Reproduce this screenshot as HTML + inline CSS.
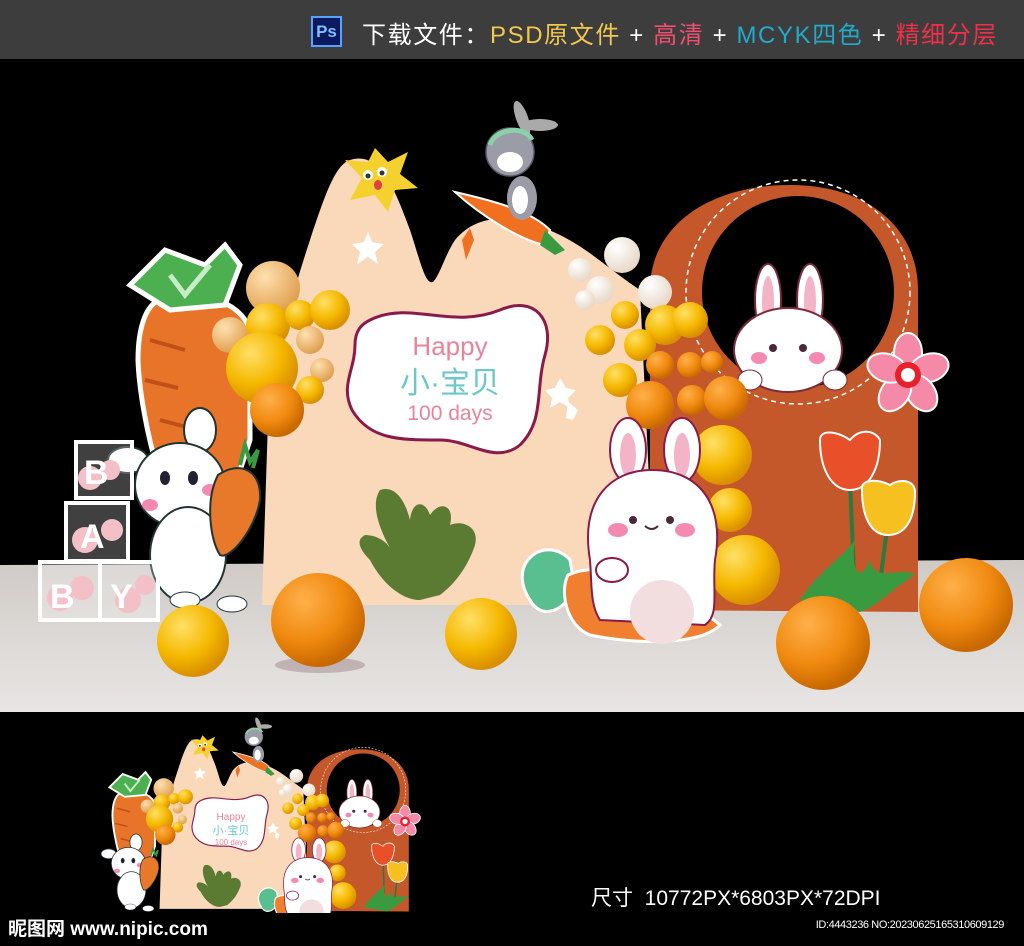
<!DOCTYPE html>
<html><head><meta charset="utf-8"><style>
html,body{margin:0;padding:0;background:#000;}
body{width:1024px;height:946px;overflow:hidden;position:relative;font-family:"Liberation Sans","Noto Sans CJK SC",sans-serif;}
.top{position:absolute;left:0;top:0;width:1024px;height:59px;background:#3d3d3d;}
.ps{position:absolute;left:311px;top:16px;width:31px;height:31px;background:#0a1a5c;border:2px solid #5aa0ff;box-sizing:border-box;color:#7cc0ff;font-size:17px;font-weight:bold;text-align:center;line-height:27px;}
.tt{position:absolute;left:362px;top:15px;font-size:24px;color:#fff;white-space:nowrap;letter-spacing:1.6px;}
.y{color:#f2c94c}.p{color:#f0506e}.c{color:#22aacc}.r{color:#f0304a}
.size{position:absolute;left:591px;top:882px;color:#fff;font-size:21px;}
.logo{position:absolute;left:8px;top:914px;color:#fff;font-size:19px;font-weight:bold;}
.id{position:absolute;right:20px;top:919px;color:#fff;font-size:11px;letter-spacing:-0.4px;}
svg{position:absolute;left:0;top:0;}
</style></head><body>
<div class="top"></div>
<div class="ps">Ps</div>
<div class="tt">下载文件：<span class="y">PSD原文件</span> + <span class="p">高清</span> + <span class="c">MCYK四色</span> + <span class="r">精细分层</span></div>
<svg width="1024" height="946" viewBox="0 0 1024 946">
<defs>
<radialGradient id="yb" cx="0.35" cy="0.3" r="0.7"><stop offset="0" stop-color="#ffe066"/><stop offset="0.6" stop-color="#f5b800"/><stop offset="1" stop-color="#d98f00"/></radialGradient>
<radialGradient id="ob" cx="0.35" cy="0.3" r="0.7"><stop offset="0" stop-color="#ffb04a"/><stop offset="0.6" stop-color="#f08a10"/><stop offset="1" stop-color="#c86800"/></radialGradient>
<radialGradient id="wb" cx="0.35" cy="0.3" r="0.7"><stop offset="0" stop-color="#fff"/><stop offset="1" stop-color="#e8d8c8"/></radialGradient>
<radialGradient id="tb" cx="0.35" cy="0.3" r="0.7"><stop offset="0" stop-color="#ffe0b0"/><stop offset="1" stop-color="#e0a050"/></radialGradient>
<linearGradient id="fl" x1="0" y1="0" x2="0" y2="1"><stop offset="0" stop-color="#cfcac6"/><stop offset="1" stop-color="#e8e6e4"/></linearGradient>
<g id="art">
 <path d="M262,605 L268,420 C275,360 290,300 310,240 C325,195 335,165 350,160 C380,150 395,190 410,230 C420,260 425,285 433,282 C440,275 445,255 455,240 C480,210 520,215 560,235 C590,250 610,270 640,290 L655,605 Z" fill="#f9d9ba"/>
 <path d="M650,610 L650,290 C650,225 710,185 790,185 C870,185 918,230 918,290 L918,612 Z" fill="#c4582a"/>
 <circle cx="798" cy="292" r="96" fill="#000"/>
 <circle cx="798" cy="292" r="112" fill="none" stroke="#fff" stroke-width="1.5" stroke-dasharray="5 4"/>
 <ellipse cx="768" cy="300" rx="13" ry="36" fill="#fff" stroke="#7a2b3a" stroke-width="2"/>
 <ellipse cx="810" cy="300" rx="13" ry="36" fill="#fff" stroke="#7a2b3a" stroke-width="2"/>
 <ellipse cx="768" cy="302" rx="6" ry="26" fill="#f4b4c8"/><ellipse cx="810" cy="302" rx="6" ry="26" fill="#f4b4c8"/>
 <ellipse cx="788" cy="350" rx="54" ry="42" fill="#fff" stroke="#7a2b3a" stroke-width="2"/>
 <circle cx="773" cy="348" r="4" fill="#4a2a3a"/><circle cx="803" cy="348" r="4" fill="#4a2a3a"/>
 <ellipse cx="759" cy="358" rx="8" ry="6" fill="#f48ab0"/><ellipse cx="817" cy="358" rx="8" ry="6" fill="#f48ab0"/>
 <ellipse cx="750" cy="380" rx="12" ry="10" fill="#fff" stroke="#7a2b3a"/><ellipse cx="835" cy="380" rx="12" ry="10" fill="#fff" stroke="#7a2b3a"/>
 <g transform="translate(908,375)">
  <g fill="#f48aa8" stroke="#fff" stroke-width="2">
   <ellipse cx="0" cy="-22" rx="14" ry="20"/><ellipse cx="21" cy="-7" rx="14" ry="20" transform="rotate(72 21 -7)"/><ellipse cx="13" cy="18" rx="14" ry="20" transform="rotate(144 13 18)"/><ellipse cx="-13" cy="18" rx="14" ry="20" transform="rotate(216 -13 18)"/><ellipse cx="-21" cy="-7" rx="14" ry="20" transform="rotate(288 -21 -7)"/>
  </g>
  <circle r="13" fill="#e8202a"/><circle r="7" fill="#fff"/>
 </g>
 <path d="M850,480 L855,600 M888,520 L878,600" stroke="#2d7a40" stroke-width="4"/>
 <path d="M800,600 C820,570 840,560 855,540 C850,570 860,585 870,560 C875,585 900,565 915,575 C890,590 880,605 860,612 Z" fill="#3a9a40"/>
 <path d="M820,440 C820,430 835,430 850,440 C860,428 875,430 880,440 C880,470 868,490 850,490 C832,490 820,470 820,440 Z" fill="#e8502a" stroke="#fff" stroke-width="2"/>
 <path d="M862,490 C860,480 875,478 890,485 C900,478 915,480 915,492 C915,520 905,535 888,535 C870,535 862,515 862,490 Z" fill="#f5c020" stroke="#fff" stroke-width="2"/>
 <path d="M160,300 C200,290 240,300 250,330 L250,440 C240,470 220,540 200,540 C170,540 140,420 138,360 C138,330 145,305 160,300 Z" fill="#e77428" stroke="#fff" stroke-width="5"/>
 <path d="M150,340 L185,350 M145,380 L178,388 M160,420 L190,428" stroke="#c0501a" stroke-width="4"/>
 <path d="M130,285 L165,250 L205,265 L225,245 L240,265 L225,305 L170,310 Z" fill="#4caf50" stroke="#fff" stroke-width="5"/>
 <path d="M170,275 L185,295 L210,265" stroke="#c8ecc8" stroke-width="5" fill="none"/>
 <path d="M375,148 L388,162 L408,152 L400,174 L418,188 L395,190 L388,212 L375,195 L350,200 L362,178 L345,160 L368,162 Z" fill="#f5d130"/>
 <circle cx="368" cy="175" r="5" fill="#fff"/><circle cx="382" cy="172" r="5" fill="#fff"/><circle cx="368" cy="176" r="2.5" fill="#333"/><circle cx="382" cy="173" r="2.5" fill="#333"/>
 <ellipse cx="378" cy="185" rx="4" ry="5" fill="#e04040"/>
 <path d="M368,232 L372,242 L384,244 L375,252 L378,264 L368,257 L357,264 L360,252 L352,244 L364,242 Z" fill="#fff"/>
 <path d="M455,192 C490,200 530,210 550,230 L545,245 C520,240 480,215 455,192 Z" fill="#f07020" stroke="#fff" stroke-width="2"/>
 <path d="M545,230 L565,250 L555,255 L540,245 Z" fill="#3a9a40"/>
 <path d="M462,240 L470,228 L474,240 L466,260 Z" fill="#f07020"/>
 <ellipse cx="522" cy="118" rx="6" ry="18" fill="#aaa" transform="rotate(-20 522 118)"/>
 <ellipse cx="540" cy="125" rx="18" ry="6" fill="#aaa"/>
 <circle cx="510" cy="152" r="24" fill="#9a9ca8" stroke="#5a5a6a" stroke-width="1.5"/>
 <path d="M490,145 C495,128 525,125 532,140" stroke="#8ad0a8" stroke-width="5" fill="none"/>
 <ellipse cx="510" cy="162" rx="13" ry="10" fill="#fff"/>
 <ellipse cx="522" cy="198" rx="15" ry="22" fill="#9a9ca8"/>
 <ellipse cx="520" cy="200" rx="8" ry="14" fill="#fff"/>
 <path d="M370,320 C410,300 450,330 500,310 C535,295 555,320 545,355 C535,390 545,420 520,445 C495,465 470,440 440,440 C400,440 370,440 352,410 C340,385 355,370 355,345 C355,330 362,324 370,320 Z" fill="#fff" stroke="#8a1a4a" stroke-width="3"/>
 <circle cx="273" cy="288" r="27" fill="url(#tb)"/>
 <circle cx="230" cy="335" r="18" fill="url(#tb)"/>
 <circle cx="268" cy="325" r="22" fill="url(#yb)"/>
 <circle cx="300" cy="315" r="15" fill="url(#yb)"/>
 <circle cx="330" cy="310" r="20" fill="url(#yb)"/>
 <circle cx="310" cy="340" r="14" fill="url(#tb)"/>
 <circle cx="322" cy="370" r="12" fill="url(#tb)"/>
 <circle cx="262" cy="368" r="36" fill="url(#yb)"/>
 <circle cx="310" cy="390" r="14" fill="url(#yb)"/>
 <circle cx="277" cy="410" r="27" fill="url(#ob)"/>
 <circle cx="622" cy="255" r="18" fill="url(#wb)"/>
 <circle cx="580" cy="270" r="12" fill="url(#wb)"/>
 <circle cx="600" cy="290" r="14" fill="url(#wb)"/>
 <circle cx="655" cy="292" r="17" fill="url(#wb)"/>
 <circle cx="585" cy="300" r="10" fill="url(#wb)"/>
 <circle cx="625" cy="315" r="14" fill="url(#yb)"/>
 <circle cx="665" cy="325" r="20" fill="url(#yb)"/>
 <circle cx="690" cy="320" r="18" fill="url(#yb)"/>
 <circle cx="600" cy="340" r="15" fill="url(#yb)"/>
 <circle cx="640" cy="345" r="16" fill="url(#yb)"/>
 <circle cx="620" cy="380" r="17" fill="url(#yb)"/>
 <circle cx="660" cy="365" r="14" fill="url(#ob)"/>
 <circle cx="690" cy="365" r="13" fill="url(#ob)"/>
 <circle cx="712" cy="362" r="11" fill="url(#ob)"/>
 <circle cx="650" cy="405" r="24" fill="url(#ob)"/>
 <circle cx="692" cy="400" r="15" fill="url(#ob)"/>
 <circle cx="726" cy="398" r="22" fill="url(#ob)"/>
 <circle cx="722" cy="455" r="30" fill="url(#yb)"/>
 <circle cx="730" cy="510" r="22" fill="url(#yb)"/>
 <circle cx="745" cy="570" r="35" fill="url(#yb)"/>
 <circle cx="682" cy="440" r="18" fill="url(#ob)"/>
 <path d="M568,402 L578,410 L573,420 L566,418 Z" fill="#fff"/>
 <path d="M560,378 L566,388 L576,390 L568,398 L570,408 L560,402 L550,408 L552,398 L545,390 L555,388 Z" fill="#fff"/>
 <path d="M420,600 C400,600 380,580 370,560 C360,550 355,540 365,535 C375,535 385,540 390,548 C380,530 370,505 380,490 C395,485 405,500 410,520 C412,500 425,500 430,515 C440,500 455,505 450,525 C460,520 480,525 475,545 C470,560 460,580 440,595 Z" fill="#5c7b32"/>
 <path d="M528,560 C540,545 560,548 570,560 L575,590 C560,615 540,618 530,600 C520,585 520,570 528,560 Z" fill="#5abf90" stroke="#fff" stroke-width="3"/>
 <path d="M568,575 C600,560 660,575 720,625 C700,645 640,645 590,635 C565,625 560,590 568,575 Z" fill="#f08030" stroke="#fff" stroke-width="3"/>
 <ellipse cx="628" cy="450" rx="18" ry="32" fill="#fff" stroke="#8a1a4a" stroke-width="2"/>
 <ellipse cx="682" cy="450" rx="18" ry="32" fill="#fff" stroke="#8a1a4a" stroke-width="2"/>
 <ellipse cx="628" cy="455" rx="8" ry="22" fill="#f4b4c8"/><ellipse cx="682" cy="455" rx="8" ry="22" fill="#f4b4c8"/>
 <path d="M590,560 C580,500 610,470 652,470 C700,470 725,505 715,560 C712,590 720,615 705,625 L600,620 C590,605 592,585 590,560 Z" fill="#fff" stroke="#8a1a4a" stroke-width="2"/>
 <circle cx="633" cy="520" r="4" fill="#4a2a3a"/><circle cx="670" cy="520" r="4" fill="#4a2a3a"/>
 <ellipse cx="618" cy="530" rx="10" ry="7" fill="#f48ab0"/><ellipse cx="685" cy="530" rx="10" ry="7" fill="#f48ab0"/>
 <path d="M645,526 Q652,532 658,526" stroke="#4a2a3a" stroke-width="2" fill="none"/>
 <ellipse cx="612" cy="570" rx="16" ry="12" fill="#fff" stroke="#8a1a4a" stroke-width="2"/>
 <circle cx="662" cy="612" r="32" fill="#f2dede"/>
 <ellipse cx="200" cy="430" rx="16" ry="22" fill="#fff" stroke="#233" stroke-width="2"/>
 <ellipse cx="128" cy="460" rx="20" ry="13" fill="#fff" stroke="#233" stroke-width="2"/>
 <ellipse cx="180" cy="485" rx="45" ry="42" fill="#fff" stroke="#233" stroke-width="2"/>
 <ellipse cx="188" cy="555" rx="38" ry="48" fill="#fff" stroke="#233" stroke-width="2"/>
 <ellipse cx="165" cy="478" rx="5" ry="7" fill="#223"/><ellipse cx="193" cy="478" rx="5" ry="7" fill="#223"/>
 <ellipse cx="150" cy="505" rx="8" ry="6" fill="#f48ab0"/><ellipse cx="210" cy="490" rx="8" ry="6" fill="#f48ab0"/>
 <path d="M218,475 C240,460 262,470 260,500 C255,530 230,560 220,555 C210,540 205,500 218,475 Z" fill="#e8782a" stroke="#233" stroke-width="2"/>
 <path d="M240,465 L245,445 L250,462 L258,450 L253,468" stroke="#3a9a40" stroke-width="4" fill="none"/>
 <ellipse cx="185" cy="600" rx="15" ry="8" fill="#fff" stroke="#233"/><ellipse cx="232" cy="604" rx="15" ry="8" fill="#fff" stroke="#233"/>
</g>
</defs>
<path d="M0,565 L1024,560 L1024,712 L0,712 Z" fill="url(#fl)"/>
<use href="#art"/>
<g fill="rgba(255,255,255,0.25)" stroke="#fff" stroke-width="4">
 <rect x="76" y="442" width="56" height="56"/><rect x="66" y="503" width="62" height="58"/><rect x="40" y="562" width="60" height="58"/><rect x="100" y="562" width="58" height="58"/>
</g>
<g fill="#f4c0c8"><circle cx="90" cy="478" r="12"/><circle cx="110" cy="470" r="10"/><circle cx="85" cy="540" r="13"/><circle cx="112" cy="530" r="11"/><circle cx="60" cy="598" r="13"/><circle cx="82" cy="588" r="12"/><circle cx="128" cy="600" r="13"/><circle cx="145" cy="585" r="10"/></g>
<g fill="#fff" font-weight="bold" font-size="34" font-family="Liberation Sans, sans-serif">
 <text x="84" y="484">B</text><text x="80" y="548">A</text><text x="50" y="608">B</text><text x="110" y="608">Y</text>
</g>
<text x="450" y="355" text-anchor="middle" font-size="26" fill="#e8849a" font-family="Liberation Sans, sans-serif">Happy</text>
<text x="450" y="393" text-anchor="middle" font-size="30" fill="#6cc8c8" font-family="Liberation Sans, 'Noto Sans CJK SC', sans-serif">小·宝贝</text>
<text x="450" y="420" text-anchor="middle" font-size="21" fill="#e8849a" font-family="Liberation Sans, sans-serif">100 days</text>
<ellipse cx="320" cy="665" rx="45" ry="8" fill="rgba(120,80,90,0.3)"/>
<circle cx="318" cy="620" r="47" fill="url(#ob)"/>
<circle cx="481" cy="634" r="36" fill="url(#yb)"/>
<circle cx="193" cy="641" r="36" fill="url(#yb)"/>
<circle cx="823" cy="643" r="47" fill="url(#ob)"/>
<circle cx="966" cy="605" r="47" fill="url(#ob)"/>
<g transform="translate(60,679) scale(0.38)"><use href="#art"/></g>
<rect x="100" y="913" width="340" height="20" fill="#000"/>
<text x="231" y="820" text-anchor="middle" font-size="10" fill="#e8849a">Happy</text>
<text x="231" y="834" text-anchor="middle" font-size="11" fill="#6cc8c8" font-family="Liberation Sans, 'Noto Sans CJK SC', sans-serif">小·宝贝</text>
<text x="231" y="845" text-anchor="middle" font-size="8" fill="#e8849a">100 days</text>
</svg>
<div class="size">尺寸&nbsp; 10772PX*6803PX*72DPI</div>
<div class="logo">昵图网 www.nipic.com</div>
<div class="id">ID:4443236 NO:20230625165310609129</div>
</body></html>
